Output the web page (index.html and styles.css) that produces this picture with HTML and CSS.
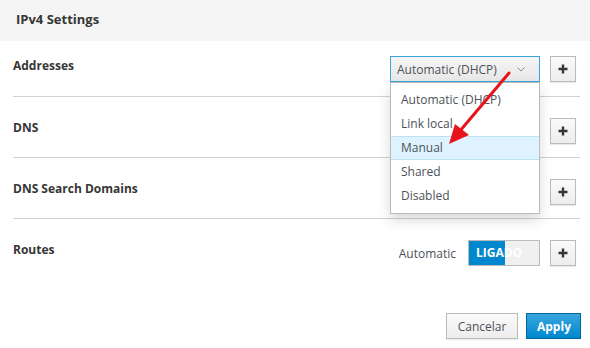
FILE: index.html
```html
<!DOCTYPE html>
<html lang="en">

<head>
  <meta charset="UTF-8">
  <meta name="viewport" content="width=device-width, initial-scale=1.0">
  <title>IPv4 Settings</title>
  <link rel="stylesheet" href="styles.css">
</head>

<body>
  <div class="dialog">
    <div class="dialogHeader">IPv4 Settings</div>

    <div class="dialogBody">
      <div class="settingRow">
        <div class="rowLabel">Addresses</div>
        <div class="rowControls">
          <div class="selectWrap">
            <div class="selectBox">
              <span>Automatic (DHCP)</span>
              <svg class="chevron" width="8" height="5" viewBox="0 0 8 5">
                <polyline points="0.5,0.5 4,4 7.5,0.5" fill="none" stroke="#8b8d8f" stroke-width="1" />
              </svg>
            </div>
            <ul class="dropMenu">
              <li>Automatic (DHCP)</li>
              <li>Link local</li>
              <li class="active">Manual</li>
              <li>Shared</li>
              <li>Disabled</li>
            </ul>
          </div>
          <button class="plusBtn"><svg width="10" height="10" viewBox="0 0 10 10"><path d="M5 0.5v9M0.5 5h9" stroke="#363636" stroke-width="2.4" /></svg></button>
        </div>
      </div>

      <div class="settingRow">
        <div class="rowLabel">DNS</div>
        <div class="rowControls">
          <button class="plusBtn"><svg width="10" height="10" viewBox="0 0 10 10"><path d="M5 0.5v9M0.5 5h9" stroke="#363636" stroke-width="2.4" /></svg></button>
        </div>
      </div>

      <div class="settingRow">
        <div class="rowLabel">DNS Search Domains</div>
        <div class="rowControls">
          <button class="plusBtn"><svg width="10" height="10" viewBox="0 0 10 10"><path d="M5 0.5v9M0.5 5h9" stroke="#363636" stroke-width="2.4" /></svg></button>
        </div>
      </div>

      <div class="settingRow">
        <div class="rowLabel">Routes</div>
        <div class="rowControls">
          <span class="autoText">Automatic</span>
          <div class="toggle">LIGADO</div>
          <button class="plusBtn"><svg width="10" height="10" viewBox="0 0 10 10"><path d="M5 0.5v9M0.5 5h9" stroke="#363636" stroke-width="2.4" /></svg></button>
        </div>
      </div>
    </div>

    <div class="dialogFooter">
      <button class="btn btnDefault">Cancelar</button>
      <button class="btn btnPrimary">Apply</button>
    </div>

    <!-- red pointer drawn over the menu -->
    <svg class="pointer" width="590" height="348" viewBox="0 0 590 348">
      <line x1="509" y1="73" x2="459" y2="132" stroke="#e8141b" stroke-width="3" stroke-linecap="round" />
      <polygon points="449,144 455,124 469,135" fill="#e8141b" />
    </svg>
  </div>
</body>

</html>
```

FILE: styles.css
```css
* {
  box-sizing: border-box;
}

body {
  margin: 0;
  font-family: "Open Sans", "Liberation Sans", sans-serif;
  color: #363636;
  background: #ffffff;
}

.dialog {
  position: relative;
  width: 590px;
  height: 348px;
  overflow: hidden;
}

.dialogHeader {
  height: 41px;
  background: #f5f5f5;
  padding-left: 16px;
  line-height: 38px;
  font-size: 13px;
  font-weight: 700;
}

.dialogBody {
  padding: 0 10px 0 13px;
}

.settingRow {
  display: flex;
  align-items: flex-start;
  padding: 21px 0 13px;
  border-bottom: 1px solid #d1d1d1;
}

.settingRow:first-child {
  padding: 15px 0 14px;
}

.settingRow:last-child {
  border-bottom: none;
}

.rowLabel {
  flex: 1;
  font-size: 12px;
  font-weight: 700;
  line-height: 19px;
}

.rowControls {
  display: flex;
  align-items: center;
  gap: 10px;
  margin-right: 4px;
}

.selectWrap {
  position: relative;
}

.selectBox {
  width: 150px;
  height: 26px;
  display: flex;
  align-items: center;
  justify-content: space-between;
  padding: 0 14px 0 6px;
  border: 1px solid #39a5dc;
  background: linear-gradient(#f5f5f5, #e8e8e8);
  font-size: 12px;
  color: #4d5258;
}

.chevron {
  margin-top: 1px;
}

.dropMenu {
  position: absolute;
  top: 26px;
  left: 0;
  width: 150px;
  margin: 0;
  padding: 5px 0;
  list-style: none;
  background: #ffffff;
  border: 1px solid #bbbbbb;
  box-shadow: 0 6px 12px rgba(0, 0, 0, 0.15);
  z-index: 2;
}

.dropMenu li {
  height: 24px;
  line-height: 24px;
  padding-left: 10px;
  font-size: 12px;
  color: #4d5258;
}

.dropMenu li.active {
  background: #def3ff;
  box-shadow: inset 0 1px 0 #bee1f4, inset 0 -1px 0 #bee1f4;
}

.plusBtn {
  width: 26px;
  height: 26px;
  padding: 0;
  display: flex;
  align-items: center;
  justify-content: center;
  border: 1px solid #bbbbbb;
  background: linear-gradient(#fafafa, #ededed);
  box-shadow: 0 1px 1px rgba(3, 3, 3, 0.08);
}

.autoText {
  font-size: 12px;
  color: #4d5258;
  margin-right: 2px;
}

.toggle {
  width: 72px;
  height: 26px;
  line-height: 24px;
  padding-left: 7px;
  border: 1px solid #bbbbbb;
  background: linear-gradient(to right, #0088ce 0, #0088ce 36px, #f0f0f0 36px);
  color: #ffffff;
  font-size: 12px;
  font-weight: 700;
}

.dialogFooter {
  display: flex;
  justify-content: flex-end;
  gap: 8px;
  padding-right: 9px;
  margin-top: 34px;
}

.btn {
  height: 26px;
  padding: 0 10px;
  font-family: "Open Sans", "Liberation Sans", sans-serif;
  font-size: 12px;
  border: 1px solid #bbbbbb;
}

.btnDefault {
  width: 72px;
  background: linear-gradient(#fafafa, #ededed);
  color: #4d5258;
  box-shadow: 0 1px 1px rgba(3, 3, 3, 0.08);
}

.btnPrimary {
  width: 55px;
  background: linear-gradient(#39a5dc, #0088ce);
  border-color: #00659c;
  color: #ffffff;
  font-weight: 700;
}

.pointer {
  position: absolute;
  top: 0;
  left: 0;
  z-index: 3;
  pointer-events: none;
}
```
